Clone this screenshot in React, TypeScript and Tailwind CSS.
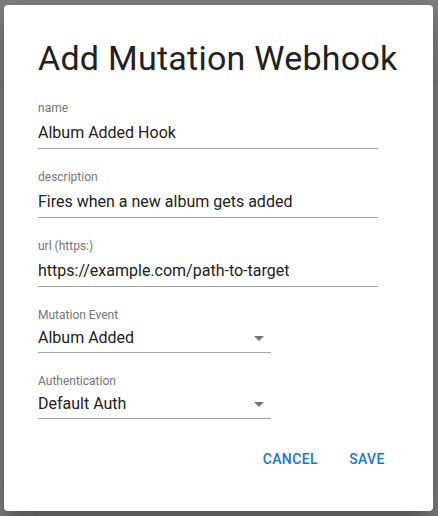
import React from 'react'

type FieldProps = {
  label: string
  value: string
}

function TextField({ label, value }: FieldProps) {
  return (
    <div className="flex w-[340px] flex-col">
      <label className="text-[12px] leading-[16px] text-[#757575]">{label}</label>
      <div className="mt-[5px] border-b border-[#a3a3a3] pb-[3px] text-[16px] leading-[24px] text-[#212121]">
        {value}
      </div>
    </div>
  )
}

function SelectField({ label, value }: FieldProps) {
  return (
    <div className="flex w-[233px] flex-col">
      <label className="text-[12px] leading-[16px] text-[#757575]">{label}</label>
      <div className="mt-[3px] flex items-center justify-between border-b border-[#a3a3a3] pb-[2px] text-[16px] leading-[24px] text-[#212121]">
        <span>{value}</span>
        {/* dropdown caret */}
        <svg width="24" height="24" viewBox="0 0 24 24" className="shrink-0 fill-[#757575]">
          <path d="M7 10l5 5 5-5z" />
        </svg>
      </div>
    </div>
  )
}

export default function App() {
  return (
    <div
      className="relative h-[516px] w-[438px] overflow-hidden bg-[#7f7f7f]"
      style={{ fontFamily: 'Roboto, "Liberation Sans", sans-serif' }}
    >
      {/* app bar behind the backdrop */}
      <div className="h-[82px] border-b border-[#787878]" />

      {/* Dialog */}
      <div className="absolute left-[4px] top-[5px] flex h-[506px] w-[429px] flex-col rounded-[4px] bg-white shadow-[0_11px_15px_-7px_rgba(0,0,0,0.2),0_24px_38px_3px_rgba(0,0,0,0.14),0_9px_46px_8px_rgba(0,0,0,0.12)]">
        <h2 className="pl-[34px] pt-[33px] text-[34px] font-normal leading-[40px] tracking-[0.25px] text-[#212121]">
          Add Mutation Webhook
        </h2>

        <div className="mt-[22px] flex flex-col gap-[20px] pl-[34px]">
          <TextField label="name" value="Album Added Hook" />
          <TextField label="description" value="Fires when a new album gets added" />
          <TextField label="url (https:)" value="https://example.com/path-to-target" />
        </div>

        <div className="mt-[20px] flex flex-col gap-[20px] pl-[34px]">
          <SelectField label="Mutation Event" value="Album Added" />
          <SelectField label="Authentication" value="Default Auth" />
        </div>

        <div className="mt-[22px] flex justify-end gap-[9px] pr-[34px]">
          <button className="min-w-[64px] rounded-[4px] px-[8px] py-[6px] text-[14px] font-medium uppercase leading-[24px] tracking-[0.4px] text-[#1976d2]">
            Cancel
          </button>
          <button className="min-w-[64px] rounded-[4px] px-[8px] py-[6px] text-[14px] font-medium uppercase leading-[24px] tracking-[0.4px] text-[#1976d2]">
            Save
          </button>
        </div>
      </div>
    </div>
  )
}
